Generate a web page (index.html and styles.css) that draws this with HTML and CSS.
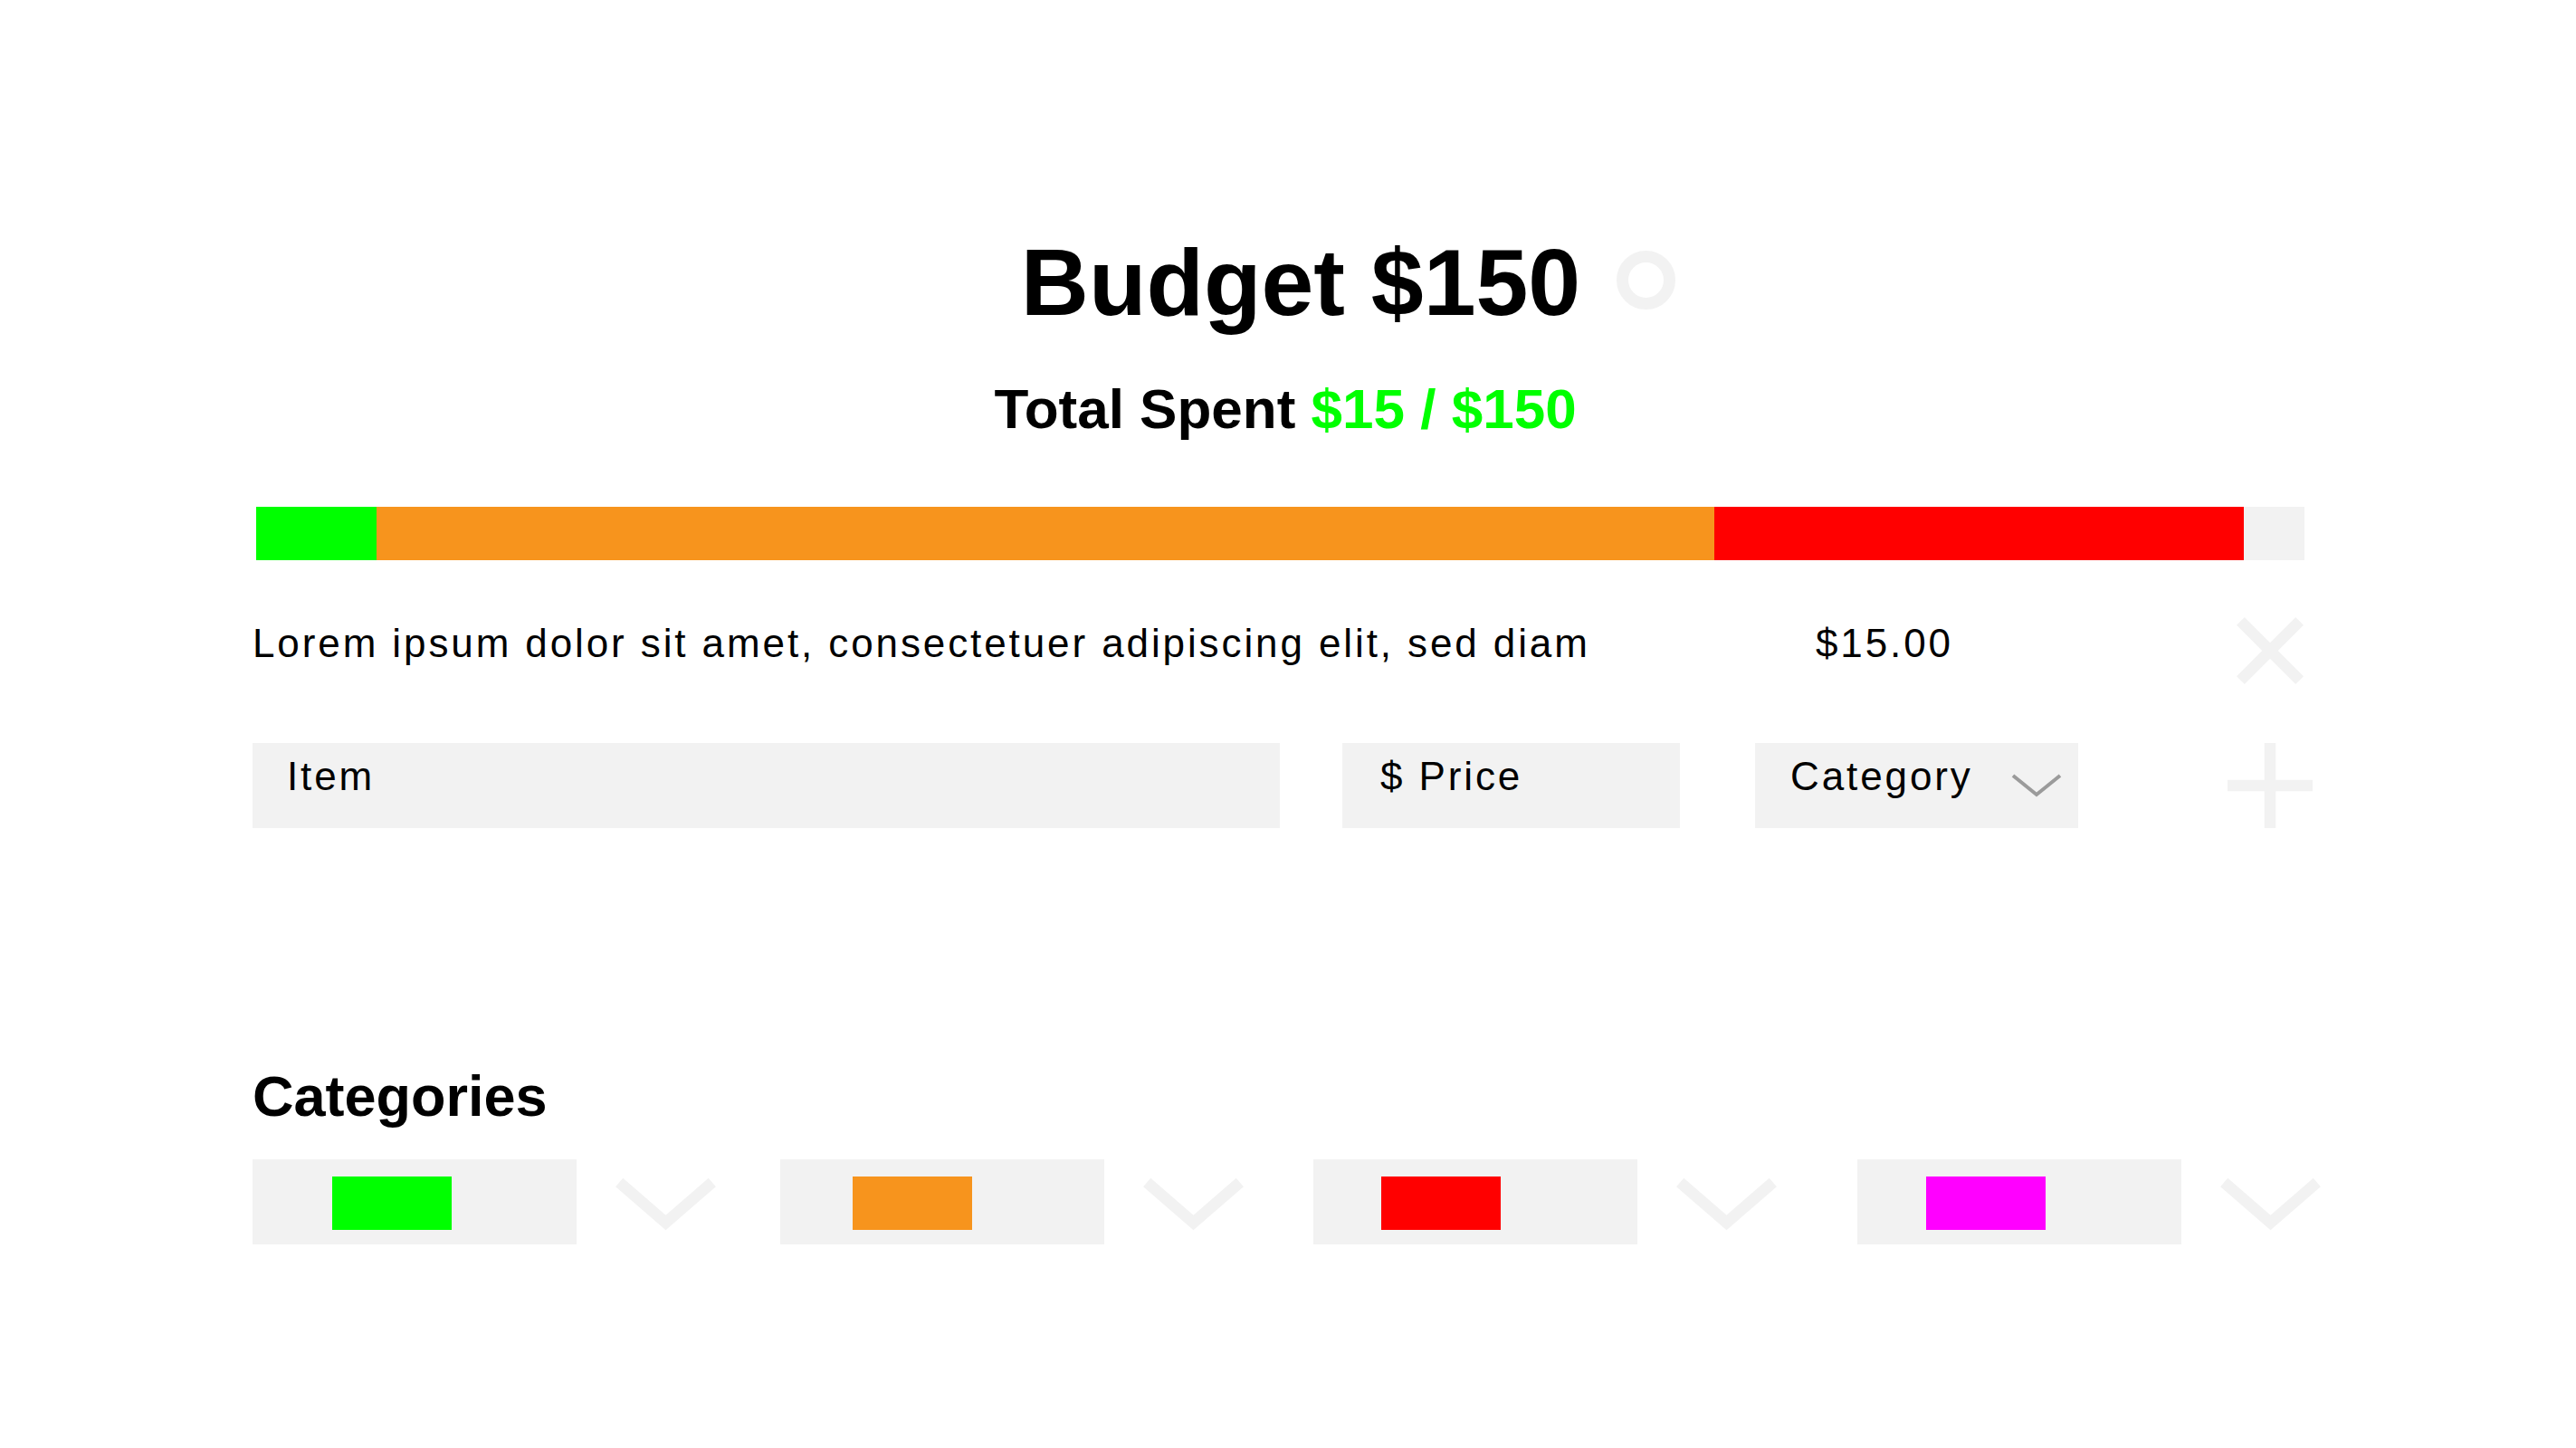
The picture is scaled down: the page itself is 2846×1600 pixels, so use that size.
FILE: index.html
```html
<!DOCTYPE html>
<html lang="en">
<head>
<meta charset="utf-8">
<title>Budget</title>
<link rel="stylesheet" href="styles.css">
</head>
<body>
<main class="page">
  <header class="header">
    <h1 class="title"><span class="title-text">Budget $150<span class="status-ring"></span></span></h1>
    <p class="spent">Total Spent <span class="spent-amount">$15 / $150</span></p>
  </header>

  <div class="bar">
    <div class="bar-seg seg-green" style="width:132.6px"></div>
    <div class="bar-seg seg-orange" style="width:1478.4px"></div>
    <div class="bar-seg seg-red" style="width:585.3px"></div>
    <div class="bar-seg seg-rest"></div>
  </div>

  <div class="expense">
    <span class="expense-desc">Lorem ipsum dolor sit amet, consectetuer adipiscing elit, sed diam</span>
    <span class="expense-price">$15.00</span>
    <div class="icon remove-icon">
      <svg width="74" height="74" viewBox="0 0 74 74"><path d="M4.4 4.4L69.6 69.6M69.6 4.4L4.4 69.6" fill="none" stroke="#f2f2f2" stroke-width="12.5"/></svg>
    </div>
  </div>

  <div class="add-row">
    <div class="field field-item">Item</div>
    <div class="field field-price">$ Price</div>
    <div class="field field-category">
      <span>Category</span>
      <svg class="select-chevron" width="56" height="27" viewBox="0 0 56 27"><polyline points="2,2 28,23 54,2" fill="none" stroke="#9b9b9b" stroke-width="4"/></svg>
    </div>
    <div class="icon add-icon">
      <svg width="94" height="94" viewBox="0 0 94 94"><path d="M47 0V94M0 47H94" fill="none" stroke="#f2f2f2" stroke-width="12.5"/></svg>
    </div>
  </div>

  <h2 class="cat-heading">Categories</h2>

  <div class="cat-row">
    <div class="cat">
      <div class="cat-box"><span class="swatch swatch-green"></span></div>
      <svg class="cat-chevron" width="111" height="57" viewBox="0 0 111 57"><polyline points="4.2,4.5 55.5,49 106.8,4.5" fill="none" stroke="#f2f2f2" stroke-width="12.5"/></svg>
    </div>
    <div class="cat">
      <div class="cat-box"><span class="swatch swatch-orange"></span></div>
      <svg class="cat-chevron" width="111" height="57" viewBox="0 0 111 57"><polyline points="4.2,4.5 55.5,49 106.8,4.5" fill="none" stroke="#f2f2f2" stroke-width="12.5"/></svg>
    </div>
    <div class="cat">
      <div class="cat-box"><span class="swatch swatch-red"></span></div>
      <svg class="cat-chevron" width="111" height="57" viewBox="0 0 111 57"><polyline points="4.2,4.5 55.5,49 106.8,4.5" fill="none" stroke="#f2f2f2" stroke-width="12.5"/></svg>
    </div>
    <div class="cat">
      <div class="cat-box"><span class="swatch swatch-magenta"></span></div>
      <svg class="cat-chevron" width="111" height="57" viewBox="0 0 111 57"><polyline points="4.2,4.5 55.5,49 106.8,4.5" fill="none" stroke="#f2f2f2" stroke-width="12.5"/></svg>
    </div>
  </div>
</main>
</body>
</html>
```

FILE: styles.css
```css
html, body {
  margin: 0;
  padding: 0;
  background: #ffffff;
}

body {
  font-family: "Liberation Sans", Arial, Helvetica, sans-serif;
  color: #000000;
}

h1, h2, p {
  margin: 0;
}

.page {
  padding: 260px 291px 0 279px;
}

/* Header */
.title {
  display: flex;
  justify-content: center;
  padding-left: 40px;
  font-size: 104px;
  line-height: 104px;
  font-weight: 700;
}

.title-text {
  position: relative;
  display: block;
}

.status-ring {
  position: absolute;
  left: calc(100% + 40px);
  top: 17px;
  width: 65px;
  height: 65px;
  box-sizing: border-box;
  border: 13px solid #f2f2f2;
  border-radius: 50%;
}

.spent {
  margin-top: 57px;
  padding-left: 6px;
  text-align: center;
  font-size: 62px;
  line-height: 62px;
  font-weight: 700;
}

.spent-amount {
  color: #00ff00;
}

/* Progress bar */
.bar {
  display: flex;
  height: 59px;
  margin: 77px 9px 0 4px;
}

.bar-seg {
  flex: none;
  height: 100%;
}

.seg-green { background: #00ff00; }
.seg-orange { background: #f7941d; }
.seg-red { background: #ff0000; }
.seg-rest { flex: 1; background: #f2f2f2; }

/* Shared text style */
.expense-desc,
.expense-price,
.field {
  font-size: 44px;
  line-height: 50px;
  letter-spacing: 2.9px;
}

/* Expense row */
.expense {
  display: flex;
  align-items: flex-start;
  height: 74px;
  margin-top: 63px;
}

.expense-desc {
  flex: none;
  width: 1727px;
  padding-top: 4px;
  white-space: nowrap;
}

.expense-price {
  flex: none;
  padding-top: 4px;
}

.icon {
  flex: none;
  display: flex;
}

.remove-icon {
  margin-left: auto;
  margin-right: 10px;
}

/* Add row */
.add-row {
  display: flex;
  align-items: flex-start;
  height: 94px;
  margin-top: 65px;
}

.field {
  flex: none;
  box-sizing: border-box;
  height: 94px;
  padding-top: 12px;
  background: #f2f2f2;
  white-space: nowrap;
}

.field-item {
  width: 1135px;
  padding-left: 38px;
}

.field-price {
  width: 373px;
  margin-left: 69px;
  padding-left: 42px;
}

.field-category {
  display: flex;
  justify-content: space-between;
  align-items: flex-start;
  width: 357px;
  margin-left: 83px;
  padding-left: 39px;
  padding-right: 18px;
}

.select-chevron {
  margin-top: 22px;
}

.add-icon {
  margin-left: auto;
}

/* Categories */
.cat-heading {
  margin-top: 265px;
  font-size: 63px;
  line-height: 63px;
  font-weight: 700;
}

.cat-row {
  display: flex;
  margin-top: 38px;
}

.cat {
  flex: none;
  display: flex;
  align-items: flex-start;
}

.cat:nth-child(2) { margin-left: 71px; }
.cat:nth-child(3) { margin-left: 77px; }
.cat:nth-child(4) { margin-left: 89px; }

.cat-box {
  display: flex;
  align-items: flex-start;
  width: 358px;
  height: 94px;
  background: #f2f2f2;
}

.swatch {
  display: block;
  width: 132px;
  height: 59px;
  margin-top: 19px;
}

.cat:nth-child(1) .swatch { margin-left: 88px; }
.cat:nth-child(2) .swatch { margin-left: 80px; }
.cat:nth-child(3) .swatch { margin-left: 75px; }
.cat:nth-child(4) .swatch { margin-left: 76px; }

.swatch-green { background: #00ff00; }
.swatch-orange { background: #f7941d; }
.swatch-red { background: #ff0000; }
.swatch-magenta { background: #ff00ff; }

.cat-chevron {
  flex: none;
  margin-left: 43px;
  margin-top: 21px;
  overflow: visible;
}
```
